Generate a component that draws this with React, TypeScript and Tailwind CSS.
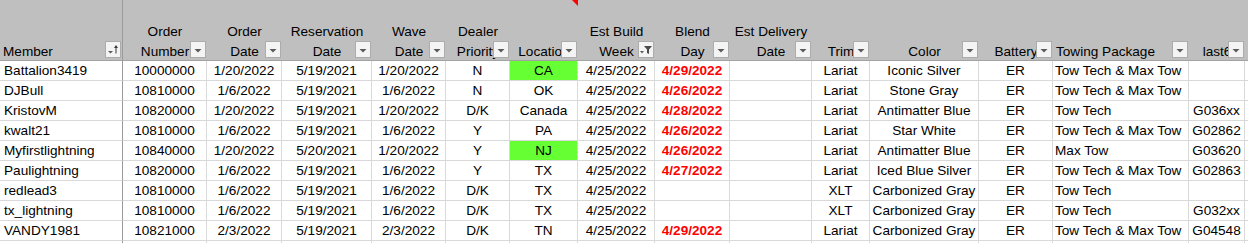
import React from "react";

type Col = {
  l1?: string;
  l2: string;
  align: "left" | "center";
  icon?: "sort" | "filter" | "drop";
  comment?: boolean;
};

const cols: Col[] = [
  { l2: "Member", align: "left", icon: "sort" },
  { l1: "Order", l2: "Number", align: "center", icon: "drop" },
  { l1: "Order", l2: "Date", align: "center", icon: "drop" },
  { l1: "Reservation", l2: "Date", align: "center", icon: "drop" },
  { l1: "Wave", l2: "Date", align: "center", icon: "drop" },
  { l1: "Dealer", l2: "Priority", align: "center", icon: "drop" },
  { l2: "Location", align: "center", icon: "drop", comment: true },
  { l1: "Est Build", l2: "Week", align: "center", icon: "filter" },
  { l1: "Blend", l2: "Day", align: "center", icon: "drop" },
  { l1: "Est Delivery", l2: "Date", align: "center", icon: "drop" },
  { l2: "Trim", align: "center", icon: "drop" },
  { l2: "Color", align: "center", icon: "drop" },
  { l2: "Battery", align: "center", icon: "drop" },
  { l2: "Towing Package", align: "left", icon: "drop" },
  { l2: "last6", align: "center", icon: "drop" },
];

const rows: string[][] = [
  ["Battalion3419", "10000000", "1/20/2022", "5/19/2021", "1/20/2022", "N", "CA", "4/25/2022", "4/29/2022", "", "Lariat", "Iconic Silver", "ER", "Tow Tech & Max Tow", ""],
  ["DJBull", "10810000", "1/6/2022", "5/19/2021", "1/6/2022", "N", "OK", "4/25/2022", "4/26/2022", "", "Lariat", "Stone Gray", "ER", "Tow Tech & Max Tow", ""],
  ["KristovM", "10820000", "1/20/2022", "5/19/2021", "1/20/2022", "D/K", "Canada", "4/25/2022", "4/28/2022", "", "Lariat", "Antimatter Blue", "ER", "Tow Tech", "G036xx"],
  ["kwalt21", "10810000", "1/6/2022", "5/19/2021", "1/6/2022", "Y", "PA", "4/25/2022", "4/26/2022", "", "Lariat", "Star White", "ER", "Tow Tech & Max Tow", "G02862"],
  ["Myfirstlightning", "10840000", "1/20/2022", "5/20/2021", "1/20/2022", "Y", "NJ", "4/25/2022", "4/26/2022", "", "Lariat", "Antimatter Blue", "ER", "Max Tow", "G03620"],
  ["Paulightning", "10820000", "1/6/2022", "5/19/2021", "1/6/2022", "Y", "TX", "4/25/2022", "4/27/2022", "", "Lariat", "Iced Blue Silver", "ER", "Tow Tech & Max Tow", "G02863"],
  ["redlead3", "10810000", "1/6/2022", "5/19/2021", "1/6/2022", "D/K", "TX", "4/25/2022", "", "", "XLT", "Carbonized Gray", "ER", "Tow Tech", ""],
  ["tx_lightning", "10810000", "1/6/2022", "5/19/2021", "1/6/2022", "D/K", "TX", "4/25/2022", "", "", "XLT", "Carbonized Gray", "ER", "Tow Tech", "G032xx"],
  ["VANDY1981", "10821000", "2/3/2022", "5/19/2021", "2/3/2022", "D/K", "TN", "4/25/2022", "4/29/2022", "", "Lariat", "Carbonized Gray", "ER", "Tow Tech & Max Tow", "G04548"],
];

const greenCells = new Set(["0-6", "4-6"]);

function FilterButton({ icon }: { icon: Col["icon"] }) {
  return (
    <div className="absolute right-[1px] bottom-[2px] w-[16px] h-[17px] bg-[#f4f4f4] border border-[#acacac] flex items-center justify-center">
      <svg width="14" height="15" viewBox="0 0 14 15">
        {icon === "drop" && <polygon points="3.5,7 10.5,7 7,10.5" fill="#5a5a5a" />}
        {icon === "sort" && (
          <>
            <polygon points="2,9 7,9 4.5,11.5" fill="#5a5a5a" />
            <line x1="10" y1="4" x2="10" y2="11.5" stroke="#3a3a3a" strokeWidth="1" />
            <polygon points="8,6 12,6 10,3" fill="#3a3a3a" />
          </>
        )}
        {icon === "filter" && (
          <>
            <polygon points="1,9 5,9 3,11.5" fill="#5a5a5a" />
            <polygon points="5,4 13,4 10,7.5 10,12 8,11 8,7.5" fill="#4a4a4a" />
          </>
        )}
      </svg>
    </div>
  );
}

export default function App() {
  return (
    <div
      className="w-[1248px] h-[243px] overflow-hidden bg-white text-black text-[13.6px]"
      style={{ fontFamily: '"Liberation Sans", Arial, sans-serif' }}
    >
      <div className="grid grid-cols-[123px_84px_75px_90px_74px_64px_68px_77px_75px_82px_58px_109px_74px_136px_56px_60px] w-max">
        {cols.map((c, i) => (
          <div
            key={c.l2}
            className={`relative h-[61px] bg-[#bfbfbf] border-b border-[#a3a3a3] flex flex-col justify-end ${
              i === 0 ? "border-r border-r-[#9a9a9a]" : ""
            } ${c.align === "left" ? "items-start pl-[3px]" : "items-center"}`}
          >
            <div className={`mb-[-2px] flex flex-col ${c.align === "left" ? "items-start" : "items-center"}`}>
              {c.l1 && <span className="leading-[20px] whitespace-nowrap">{c.l1}</span>}
              <span className="leading-[20px] whitespace-nowrap">{c.l2}</span>
            </div>
            {c.comment && (
              <svg className="absolute top-0 right-0" width="6" height="6" viewBox="0 0 6 6">
                <polygon points="0,0 6,0 6,6" fill="#ff0000" />
              </svg>
            )}
            <FilterButton icon={c.icon} />
          </div>
        ))}
        <div className="h-[61px] bg-[#bfbfbf] border-b border-[#a3a3a3]" />

        {[...rows, Array(15).fill("")].map((r, ri) => (
          <React.Fragment key={ri}>
            {r.map((v, ci) => {
              const green = greenCells.has(`${ri}-${ci}`);
              const red = ci === 8;
              return (
                <div
                  key={ci}
                  className={`h-[20px] leading-[20px] overflow-hidden whitespace-nowrap border-b border-[#d9d9d9] border-r ${
                    ci === 0 ? "border-r-[#9a9a9a]" : "border-r-[#d9d9d9]"
                  } ${cols[ci].align === "left" ? (ci === 0 ? "pl-[4px]" : "pl-[2px]") : "text-center"} ${
                    green ? "bg-[#66ff33]" : ""
                  } ${red ? "text-[#ff0000] font-bold" : ""}`}
                >
                  {v}
                </div>
              );
            })}
            <div className="h-[20px] border-b border-[#d9d9d9]" />
          </React.Fragment>
        ))}
      </div>
    </div>
  );
}
